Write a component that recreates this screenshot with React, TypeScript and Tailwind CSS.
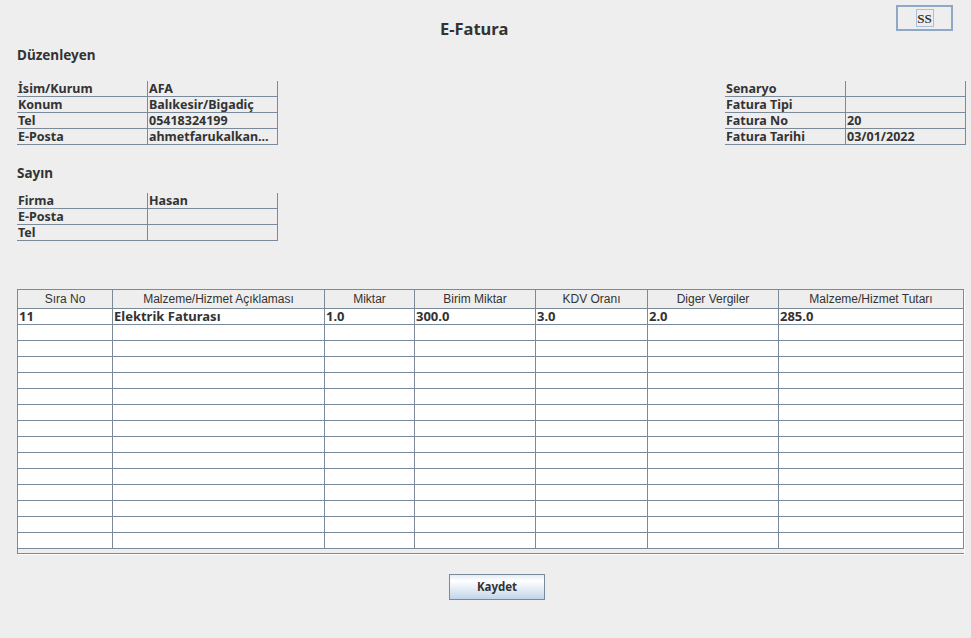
import React from 'react';

type Pair = [string, string];

const duzenleyen: Pair[] = [
  ['İsim/Kurum', 'AFA'],
  ['Konum', 'Balıkesir/Bigadiç'],
  ['Tel', '05418324199'],
  ['E-Posta', 'ahmetfarukalkan...'],
];

const fatura: Pair[] = [
  ['Senaryo', ''],
  ['Fatura Tipi', ''],
  ['Fatura No', '20'],
  ['Fatura Tarihi', '03/01/2022'],
];

const sayin: Pair[] = [
  ['Firma', 'Hasan'],
  ['E-Posta', ''],
  ['Tel', ''],
];

const columns = [
  { title: 'Sıra No', w: 'w-[95px]' },
  { title: 'Malzeme/Hizmet Açıklaması', w: 'w-[212px]' },
  { title: 'Miktar', w: 'w-[90px]' },
  { title: 'Birim Miktar', w: 'w-[121px]' },
  { title: 'KDV Oranı', w: 'w-[112px]' },
  { title: 'Diger Vergiler', w: 'w-[131px]' },
  { title: 'Malzeme/Hizmet Tutarı', w: 'w-[185px]' },
];

const rows: string[][] = [
  ['11', 'Elektrik Faturası', '1.0', '300.0', '3.0', '2.0', '285.0'],
  ...Array.from({ length: 14 }, () => ['', '', '', '', '', '', '']),
];

interface InfoTableProps {
  rows: Pair[];
  labelW: string;
  valueW: string;
}

const InfoTable: React.FC<InfoTableProps> = ({ rows, labelW, valueW }) => (
  <div className="flex flex-col w-fit text-[12.5px] font-bold">
    {rows.map(([label, value]) => (
      <div key={label} className="flex h-[16px] border-b border-[#7a8a99]">
        <div className={`${labelW} border-r border-[#7a8a99] pl-[1px] leading-[15px] whitespace-nowrap`}>{label}</div>
        <div className={`${valueW} border-r border-[#7a8a99] pl-[1px] leading-[15px] whitespace-nowrap`}>{value}</div>
      </div>
    ))}
  </div>
);

export default function App() {
  return (
    <div className="w-[971px] h-[638px] bg-[#eeeeee] text-[#333333] font-['Noto_Sans',sans-serif] flex flex-col">
      {/* title bar */}
      <div className="flex items-start h-[40px]">
        <h1 className="ml-[440px] mt-[19px] text-[16.5px] leading-[20px] font-bold">E-Fatura</h1>
        <button className="ml-auto mr-[18px] mt-[5px] w-[57px] h-[26px] border-2 border-[#8ea8c6] bg-[#eeeeee] flex items-center justify-center">
          <span className="w-[18px] h-[18px] border border-[#a9c0dc] flex items-center justify-center font-['Liberation_Serif',serif] font-bold text-[13px] leading-none text-[#333333]">
            SS
          </span>
        </button>
      </div>

      <h2 className="ml-[17px] mt-[7px] h-[16px] text-[13.5px] leading-[16px] font-bold">Düzenleyen</h2>

      <div className="flex justify-between pl-[17px] pr-[5px] mt-[18px]">
        <InfoTable rows={duzenleyen} labelW="w-[131px]" valueW="w-[130px]" />
        <InfoTable rows={fatura} labelW="w-[121px]" valueW="w-[120px]" />
      </div>

      <h2 className="ml-[17px] mt-[20px] h-[16px] text-[13.5px] leading-[16px] font-bold">Sayın</h2>

      <div className="pl-[17px] mt-[12px]">
        <InfoTable rows={sayin} labelW="w-[131px]" valueW="w-[130px]" />
      </div>

      {/* items table */}
      <div className="ml-[17px] mt-[48px] w-[947px] border-t border-l border-b border-[#7a8a99] shadow-[1px_1px_0_#ffffff] bg-[#eeeeee]">
        <div className="flex h-[19px] border-b border-[#7a8a99] bg-[#eeeeee]">
          {columns.map((c) => (
            <div
              key={c.title}
              className={`${c.w} border-r border-[#7a8a99] text-center font-['Liberation_Sans',sans-serif] text-[12px] leading-[18px] font-normal`}
            >
              {c.title}
            </div>
          ))}
        </div>
        <div className="bg-white">
          {rows.map((r, i) => (
            <div key={i} className="flex h-[16px] border-b border-[#7a8a99]">
              {columns.map((c, j) => (
                <div
                  key={c.title}
                  className={`${c.w} border-r border-[#7a8a99] pl-[1px] text-[13px] leading-[15px] font-bold whitespace-nowrap`}
                >
                  {r[j]}
                </div>
              ))}
            </div>
          ))}
        </div>
        <div className="h-[4px] bg-[#eeeeee]" />
      </div>

      <button className="ml-[449px] mt-[20px] w-[96px] h-[26px] border border-[#7a8a99] bg-gradient-to-b from-[#e4ecf6] via-white via-25% to-[#c2d5ea] text-[11.5px] font-bold text-[#333333] leading-none">
        Kaydet
      </button>
    </div>
  );
}
